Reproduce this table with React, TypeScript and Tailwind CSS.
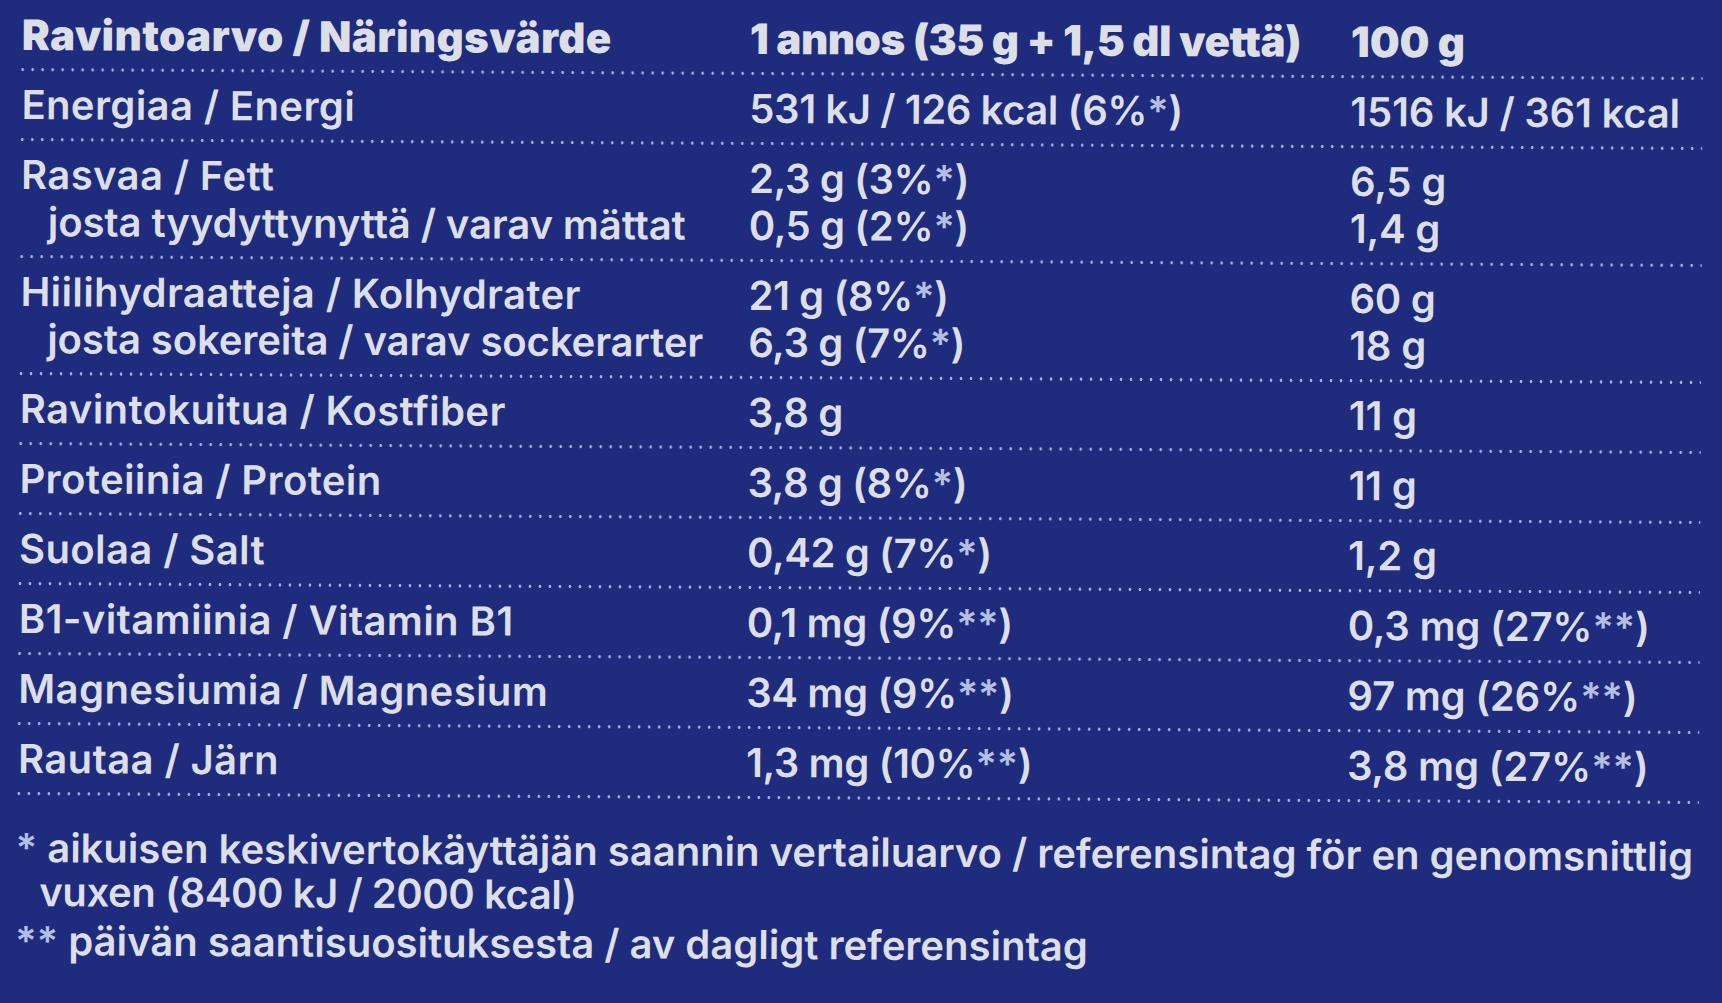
import React from "react";

type Row = { lines: [string, React.ReactNode, React.ReactNode][] };

const Star = ({ n = 1 }: { n?: number }) => (
  <span className="text-[#b3c0e4]">{n === 1 ? "*" : "**"}</span>
);

const rows: Row[] = [
  { lines: [["Energiaa / Energi", <>531 kJ / 126 kcal (6%<Star />)</>, "1516 kJ / 361 kcal"]] },
  {
    lines: [
      ["Rasvaa / Fett", <>2,3 g (3%<Star />)</>, "6,5 g"],
      ["josta tyydyttynyttä / varav mättat", <>0,5 g (2%<Star />)</>, "1,4 g"],
    ],
  },
  {
    lines: [
      ["Hiilihydraatteja / Kolhydrater", <>21 g (8%<Star />)</>, "60 g"],
      ["josta sokereita / varav sockerarter", <>6,3 g (7%<Star />)</>, "18 g"],
    ],
  },
  { lines: [["Ravintokuitua / Kostfiber", "3,8 g", "11 g"]] },
  { lines: [["Proteiinia / Protein", <>3,8 g (8%<Star />)</>, "11 g"]] },
  { lines: [["Suolaa / Salt", <>0,42 g (7%<Star />)</>, "1,2 g"]] },
  { lines: [["B1-vitamiinia / Vitamin B1", <>0,1 mg (9%<Star n={2} />)</>, <>0,3 mg (27%<Star n={2} />)</>]] },
  { lines: [["Magnesiumia / Magnesium", <>34 mg (9%<Star n={2} />)</>, <>97 mg (26%<Star n={2} />)</>]] },
  { lines: [["Rautaa / Järn", <>1,3 mg (10%<Star n={2} />)</>, <>3,8 mg (27%<Star n={2} />)</>]] },
];

const Divider = () => (
  <div className="ml-[18px] mr-[19px] h-[3px] bg-[radial-gradient(circle,rgba(185,198,240,0.9)_1.1px,transparent_1.7px)] bg-[length:10px_3px]" />
);

export default function App() {
  return (
    <div className="w-[1722px] h-[1003px] overflow-hidden bg-[#1f2b7c] text-[#dcdee8] [font-family:Inter,'Noto_Sans',sans-serif]">
      <div className="origin-top-left rotate-[0.3deg]">
        <div className="h-[68px] pl-[22px] grid grid-cols-[728px_601px_1fr] items-center text-[42px] font-black tracking-[0em]">
          <div className="tracking-[0.01em]">Ravintoarvo / Näringsvärde</div>
          <div className="tracking-[-0.01em]">1 annos (35 g + 1,5 dl vettä)</div>
          <div>100 g</div>
        </div>
        <Divider />
        {rows.map((r, i) => (
          <React.Fragment key={i}>
            <div className="py-[10px] pl-[22px] text-[40px] font-semibold leading-[47px] tracking-[-0.01em]">
              {r.lines.map((l, j) => (
                <div key={j} className="grid grid-cols-[728px_601px_1fr]">
                  <div className={j > 0 ? "pl-[27px] tracking-[-0.002em]" : "tracking-[0.01em]"}>{l[0]}</div>
                  <div>{l[1]}</div>
                  <div className="tracking-[-0.005em]">{l[2]}</div>
                </div>
              ))}
            </div>
            <Divider />
          </React.Fragment>
        ))}
        <div className="mt-[32px] text-[40px] font-semibold tracking-[0em]">
          <p className="leading-[41px] pl-[44px] -indent-[24px] whitespace-nowrap">
            <Star /> aikuisen keskivertokäyttäjän saannin vertailuarvo / referensintag för en genomsnittlig
          </p>
          <p className="mt-[3px] leading-[41px] pl-[44px] whitespace-nowrap tracking-[-0.01em]">vuxen (8400 kJ / 2000 kcal)</p>
          <p className="mt-[7px] leading-[43px] pl-[20px] whitespace-nowrap">
            <Star n={2} /> päivän saantisuosituksesta / av dagligt referensintag
          </p>
        </div>
      </div>
    </div>
  );
}
